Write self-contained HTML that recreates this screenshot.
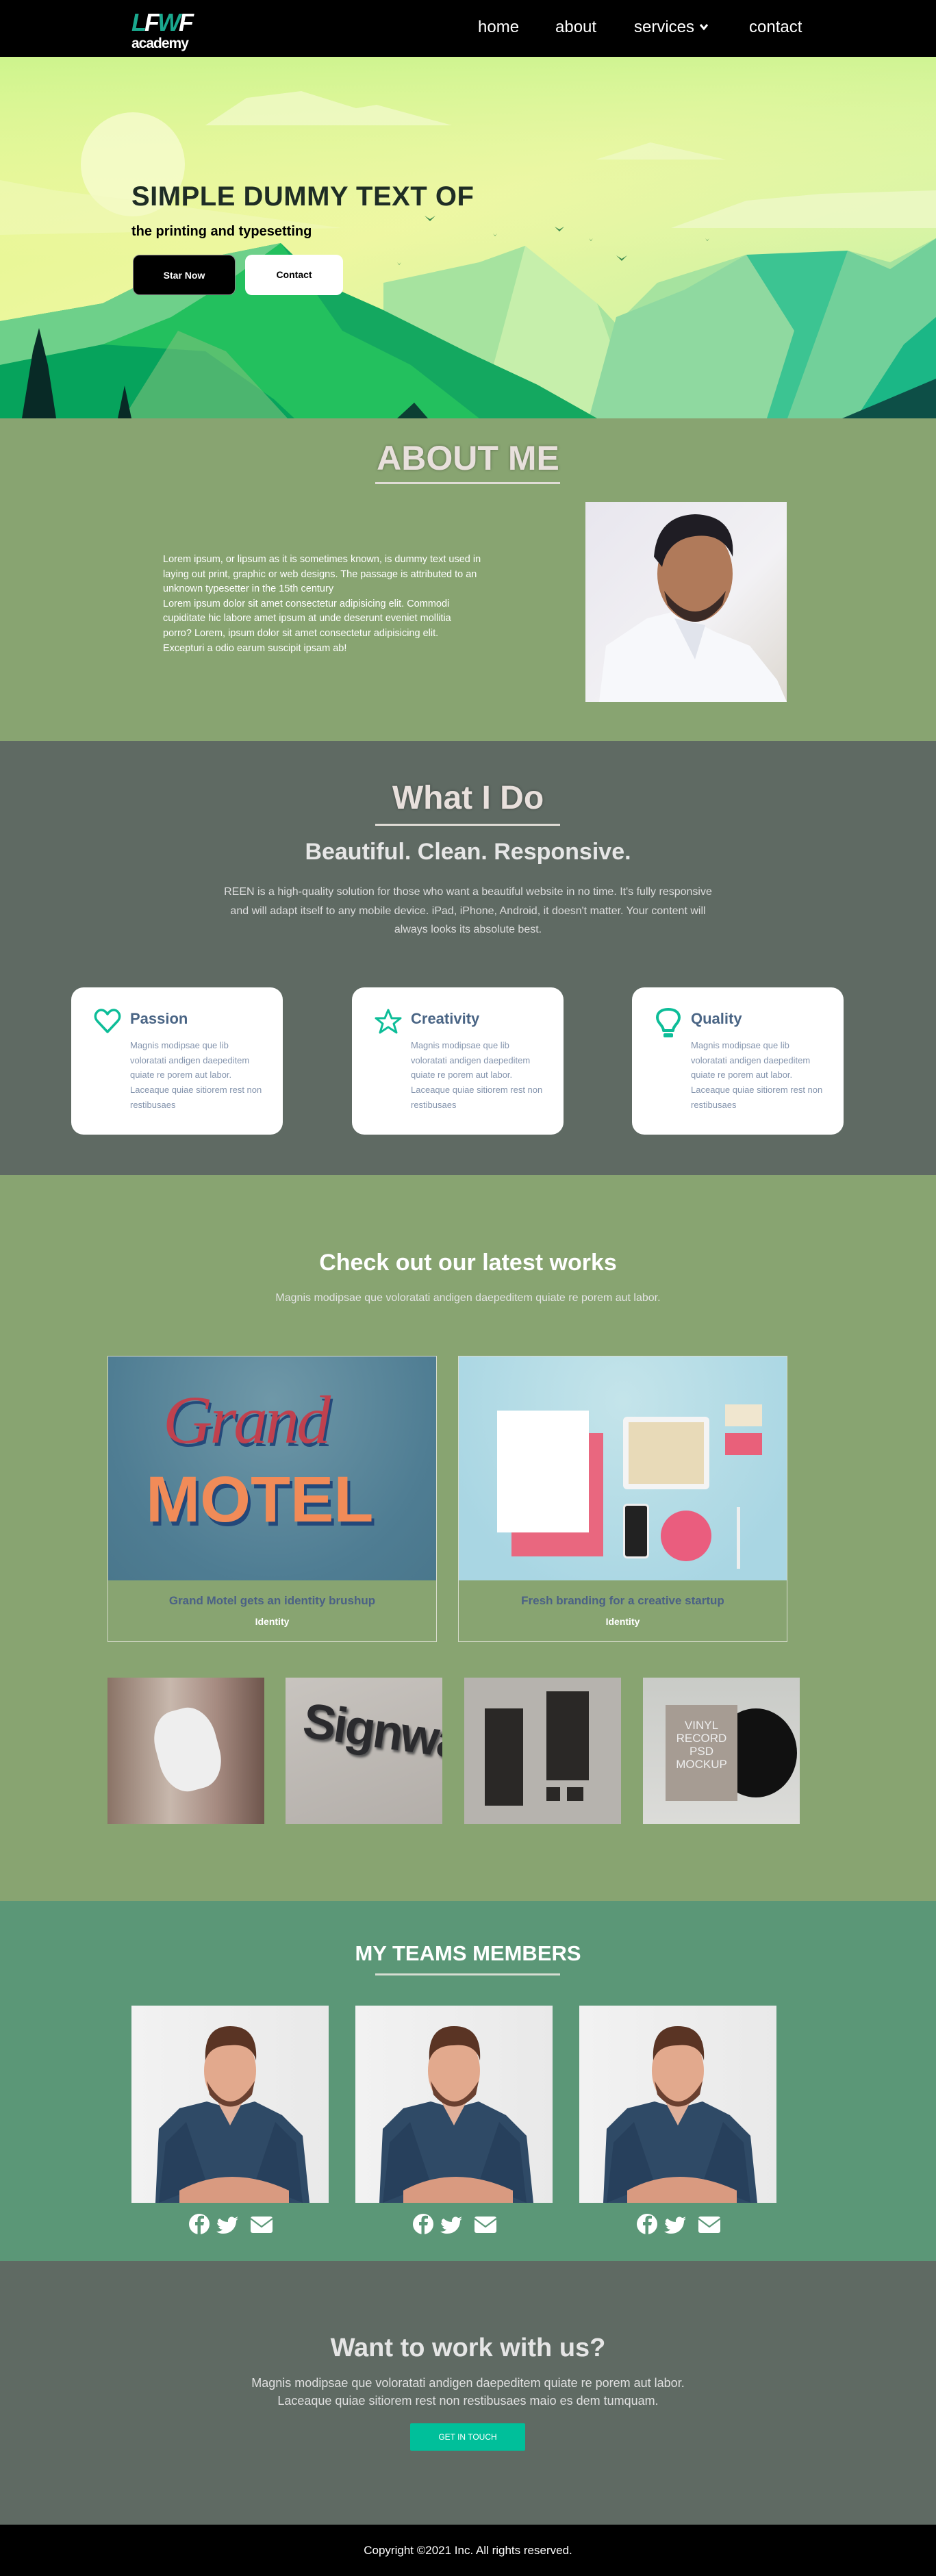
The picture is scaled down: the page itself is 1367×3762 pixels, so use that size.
<!DOCTYPE html>
<html><head><meta charset="utf-8">
<style>
*{margin:0;padding:0;box-sizing:border-box}
body{width:1367px;height:3762px;font-family:"Liberation Sans",Arial,sans-serif;background:#88a471;overflow:hidden;position:relative}
.abs{position:absolute}
nav{position:absolute;left:0;top:0;width:1367px;height:83px;background:#000}
nav a{position:absolute;top:26px;color:#fff;font-size:24px;text-decoration:none}
.hero{position:absolute;top:83px;left:0;width:1367px;height:528px;overflow:hidden}
.sec-title{position:absolute;width:1367px;text-align:center;color:#e8e0dc;font-weight:bold;text-shadow:0 0 4px rgba(0,0,0,.35)}
.uline{position:absolute;left:548px;width:270px;height:3px;background:#e0dcd6}
.card{position:absolute;top:1442px;width:309px;height:215px;background:#fff;border-radius:18px}
.card h3{position:absolute;left:86px;top:33px;font-size:22px;color:#4a6585}
.card p{position:absolute;left:86px;top:74px;font-size:13px;line-height:21.7px;color:#8494ad;width:200px}
.card svg{position:absolute;left:33px;top:30px}
.work{position:absolute;top:1980px;width:481px;border:1.5px solid #d8dccd;height:418px}
.work .img{height:327px;overflow:hidden;position:relative}
.work h4{text-align:center;color:#4b6185;font-size:17px;margin-top:20px}
.work h5{text-align:center;color:#fff;font-size:14px;margin-top:12px}
.th{position:absolute;top:2450px;width:229px;height:214px;overflow:hidden}
.team{position:absolute;top:2929px;width:288px;height:288px;background:linear-gradient(90deg,#f2f2f2,#e9e9e9);overflow:hidden}
.icons{position:absolute;top:3233px;width:122px;height:30px}
</style></head><body>

<nav>
  <div class="abs" style="left:192px;top:16px;font-size:36px;font-weight:bold;letter-spacing:-3px;line-height:34px;font-style:italic"><span style="color:#1aa88e">L</span><span style="color:#fff">F</span><span style="color:#1aa88e">W</span><span style="color:#fff">F</span></div>
  <div class="abs" style="left:192px;top:52px;font-size:21px;color:#fff;font-weight:bold;letter-spacing:-1px">academy</div>
  <a style="left:698px">home</a>
  <a style="left:811px">about</a>
  <a style="left:926px">services <svg width="14" height="12" viewBox="0 0 14 12" style="vertical-align:2px"><path d="M2 3 L7 9 L12 3" stroke="#fff" stroke-width="3" fill="none"/></svg></a>
  <a style="left:1094px">contact</a>
</nav>

<div class="hero">
<svg width="1367" height="528" viewBox="0 0 1367 528" preserveAspectRatio="none">
<defs><linearGradient id="sky" x1="0" y1="0" x2="1" y2="1">
<stop offset="0" stop-color="#e2f78a"/><stop offset="0.45" stop-color="#edf7a0"/><stop offset="1" stop-color="#bdf0a5"/></linearGradient>
<linearGradient id="sky2" x1="0" y1="0" x2="0" y2="1"><stop offset="0" stop-color="#c4f38e" stop-opacity="0.7"/><stop offset="1" stop-color="#fdfbc0" stop-opacity="0"/></linearGradient></defs>
<rect width="1367" height="528" fill="url(#sky)"/>
<rect width="1367" height="300" fill="url(#sky2)"/>
<circle cx="194" cy="157" r="76" fill="#f6fbcf" opacity="0.8"/>
<path d="M300 100 L360 60 L440 50 L520 75 L550 70 L660 100 Z" fill="#f0fac8" opacity="0.8"/>
<path d="M870 150 L950 125 L1060 150 Z" fill="#f0fac8" opacity="0.7"/>
<path d="M980 250 L1090 210 L1200 200 L1367 195 L1367 250 Z" fill="#eef9c8" opacity="0.8"/>
<path d="M0 180 L80 195 L200 210 L350 230 L500 250 L0 260 Z" fill="#f2f9c0" opacity="0.5"/>
<path d="M560 330 L700 300 L767 276 L830 330 L872 360 L900 390 L960 330 L1090 289 L1140 345 L1238 283 L1300 300 L1367 265 L1367 528 L560 528 Z" fill="#a6e39f"/>
<path d="M700 528 L767 276 L872 360 L930 528 Z" fill="#c6efab"/>
<path d="M860 528 L900 380 L1000 340 L1090 289 L1160 400 L1180 528 Z" fill="#8fd9a0"/>
<path d="M1090 289 L1160 400 L1120 528 L1230 528 L1238 283 Z" fill="#3cc492"/>
<path d="M1150 528 L1238 283 L1300 310 L1367 265 L1367 528 Z" fill="#72d09a"/>
<path d="M1250 528 L1320 420 L1367 380 L1367 528 Z" fill="#1bb786"/>
<path d="M1230 528 L1367 470 L1367 528 Z" fill="#0d4f47"/>
<path d="M0 386 L150 360 L270 300 L410 272 L470 330 L558 369 L680 430 L785 479 L872 528 L0 528 Z" fill="#23c05e"/>
<path d="M0 386 L150 360 L270 300 L410 272 L330 330 L250 380 L150 420 L0 450 Z" fill="#6ed08a"/>
<path d="M410 272 L470 330 L558 369 L680 430 L785 479 L872 528 L700 528 L600 450 L500 400 Z" fill="#14a860"/>
<path d="M0 450 L150 420 L300 430 L400 500 L430 528 L0 528 Z" fill="#06a35c"/>
<path d="M180 528 L260 400 L330 430 L420 528 Z" fill="#7bc27c" opacity="0.6"/>
<path d="M32 528 L48 430 L57 396 L70 450 L82 528 Z" fill="#082a26"/>
<path d="M172 528 L182 480 L192 528 Z" fill="#082a26"/>
<path d="M580 528 L605 505 L625 528 Z" fill="#0b3f33"/>
<g fill="#3b8a4e"><path d="M620 232 l8 5 l8 -5 l-8 8z"/><path d="M810 248 l7 4 l7 -4 l-7 7z"/><path d="M900 290 l8 5 l8 -5 l-8 8z"/><path d="M720 258 l3 3 l3 -3 l-3 4z"/><path d="M860 265 l3 3 l3 -3 l-3 4z"/><path d="M1030 265 l3 3 l3 -3 l-3 4z"/><path d="M580 300 l3 3 l3 -3 l-3 4z"/></g>
</svg>
<div class="abs" style="left:192px;top:182px;font-size:40px;font-weight:900;color:#1f2d25;letter-spacing:0.5px">SIMPLE DUMMY TEXT OF</div>
<div class="abs" style="left:192px;top:244px;font-size:20px;font-weight:bold;color:#000">the printing and typesetting</div>
<div class="abs" style="left:194px;top:289px;width:150px;height:59px;background:#000;border-radius:10px;color:#fff;font-size:14px;font-weight:bold;text-align:center;line-height:59px;border:1px solid #888">Star Now</div>
<div class="abs" style="left:358px;top:289px;width:143px;height:59px;background:#fff;border-radius:10px;color:#000;font-size:14px;font-weight:bold;text-align:center;line-height:59px">Contact</div>
</div>

<div class="abs" style="top:611px;left:0;width:1367px;height:471px;background:#88a471"></div>
<div class="sec-title" style="top:640px;font-size:50px">ABOUT ME</div>
<div class="uline" style="top:704px"></div>
<div class="abs" style="left:238px;top:807px;width:500px;font-size:14.5px;line-height:21.6px;color:#fff">Lorem ipsum, or lipsum as it is sometimes known, is dummy text used in laying out print, graphic or web designs. The passage is attributed to an unknown typesetter in the 15th century<div style="width:450px">Lorem ipsum dolor sit amet consectetur adipisicing elit. Commodi cupiditate hic labore amet ipsum at unde deserunt eveniet mollitia porro? Lorem, ipsum dolor sit amet consectetur adipisicing elit. Excepturi a odio earum suscipit ipsam ab!</div></div>
<div class="abs" style="left:855px;top:733px;width:294px;height:292px;background:linear-gradient(135deg,#e8e6ee,#f2f1f4 60%,#ddd8d0);overflow:hidden">
 <svg width="294" height="292" viewBox="0 0 294 292">
  <path d="M20 292 L30 210 L90 170 L130 160 L190 190 L240 210 L280 260 L294 292 Z" fill="#f7f8fb"/>
  <path d="M130 170 L160 230 L175 180 Z" fill="#e1e4ec"/>
  <ellipse cx="160" cy="105" rx="55" ry="70" fill="#b07a5a"/>
  <path d="M100 80 Q105 20 160 18 Q220 20 215 80 Q200 45 160 50 Q120 55 112 95 Z" fill="#1f1d24"/>
  <path d="M115 130 Q160 190 205 130 L200 150 Q160 200 120 150 Z" fill="#3a2a26"/>
 </svg>
</div>

<div class="abs" style="top:1082px;left:0;width:1367px;height:634px;background:#5f6a63"></div>
<div class="sec-title" style="top:1138px;font-size:48px">What I Do</div>
<div class="uline" style="top:1203px"></div>
<div class="abs" style="top:1225px;width:1367px;text-align:center;font-size:34px;font-weight:bold;color:#e6e6e6">Beautiful. Clean. Responsive.</div>
<div class="abs" style="top:1289px;left:320px;width:727px;text-align:center;font-size:16px;line-height:27.5px;color:#dedede">REEN is a high-quality solution for those who want a beautiful website in no time. It's fully responsive and will adapt itself to any mobile device. iPad, iPhone, Android, it doesn't matter. Your content will always looks its absolute best.</div>

<div class="card" style="left:104px">
 <svg width="40" height="40" viewBox="0 0 40 40"><path d="M20 35 L5 19 C-1 12 4 3 11 3 C15 3 18 6 20 9 C22 6 25 3 29 3 C36 3 41 12 35 19 Z" fill="none" stroke="#0dbd98" stroke-width="3.5" stroke-linejoin="round"/></svg>
 <h3>Passion</h3>
 <p>Magnis modipsae que lib voloratati andigen daepeditem quiate re porem aut labor. Laceaque quiae sitiorem rest non restibusaes</p>
</div>
<div class="card" style="left:514px">
 <svg width="40" height="40" viewBox="0 0 40 40"><path d="M20 3 L25 15 L38 15 L28 23 L32 36 L20 28 L8 36 L12 23 L2 15 L15 15 Z" fill="none" stroke="#0dbd98" stroke-width="3" stroke-linejoin="round"/></svg>
 <h3>Creativity</h3>
 <p>Magnis modipsae que lib voloratati andigen daepeditem quiate re porem aut labor. Laceaque quiae sitiorem rest non restibusaes</p>
</div>
<div class="card" style="left:923px">
 <svg width="40" height="50" viewBox="0 0 40 50"><path d="M13 33 C13 26 4 22 4 14 C4 6 11 2 20 2 C29 2 36 6 36 14 C36 22 27 26 27 33 Z" fill="none" stroke="#0dbd98" stroke-width="4" stroke-linejoin="round"/><rect x="13" y="37" width="14" height="6" rx="2" fill="#0dbd98"/></svg>
 <h3>Quality</h3>
 <p>Magnis modipsae que lib voloratati andigen daepeditem quiate re porem aut labor. Laceaque quiae sitiorem rest non restibusaes</p>
</div>

<div class="abs" style="top:1825px;width:1367px;text-align:center;font-size:34px;font-weight:bold;color:#fff">Check out our latest works</div>
<div class="abs" style="top:1887px;width:1367px;text-align:center;font-size:16px;color:#e3e3e3">Magnis modipsae que voloratati andigen daepeditem quiate re porem aut labor.</div>

<div class="work" style="left:157px">
 <div class="img" style="background:radial-gradient(ellipse at 50% 20%,#6f98a8,#4f7d93 70%,#4a778c)">
  <div class="abs" style="left:80px;top:35px;font-family:'Liberation Serif',serif;font-style:italic;font-size:100px;color:#c0414e;text-shadow:3px 5px 0 #24497a;letter-spacing:-4px">Grand</div>
  <div class="abs" style="left:55px;top:155px;font-size:95px;font-weight:900;color:#f18b58;text-shadow:4px 6px 0 #23487a">MOTEL</div>
 </div>
 <h4>Grand Motel gets an identity brushup</h4>
 <h5>Identity</h5>
</div>
<div class="work" style="left:669px">
 <div class="img" style="background:radial-gradient(ellipse at 50% 20%,#c4e4ea,#a9d6e3 80%)">
  <div class="abs" style="left:77px;top:112px;width:134px;height:180px;background:#e9677f"></div>
  <div class="abs" style="left:56px;top:79px;width:134px;height:178px;background:#fff"></div>
  <div class="abs" style="left:240px;top:88px;width:126px;height:106px;background:#f4f4f4;border-radius:6px;padding:8px"><div style="background:#e8dab8;width:100%;height:100%"></div></div>
  <div class="abs" style="left:389px;top:70px;width:54px;height:32px;background:#f0e6cf"></div>
  <div class="abs" style="left:389px;top:112px;width:54px;height:32px;background:#e9607a"></div>
  <div class="abs" style="left:240px;top:215px;width:38px;height:80px;background:#222;border:3px solid #eee;border-radius:6px"></div>
  <div class="abs" style="left:295px;top:225px;width:74px;height:74px;background:#ea5d7e;border-radius:50%"></div>
  <div class="abs" style="left:406px;top:220px;width:5px;height:90px;background:#eee"></div>
 </div>
 <h4>Fresh branding for a creative startup</h4>
 <h5>Identity</h5>
</div>

<div class="th" style="left:157px;background:linear-gradient(90deg,#8a7366,#c8b8ad 40%,#a58a80 70%,#6e554c)"><div class="abs" style="left:72px;top:45px;width:90px;height:120px;border-radius:40%;background:#eee;transform:rotate(-15deg)"></div></div>
<div class="th" style="left:417px;background:linear-gradient(160deg,#c8c4bf,#b3aea9)"><div class="abs" style="left:25px;top:40px;font-size:72px;font-weight:bold;color:#2b2b2e;transform:rotate(8deg);letter-spacing:-3px;text-shadow:3px 3px 3px #555">Signwall</div></div>
<div class="th" style="left:678px;background:#b6b3ae"><div class="abs" style="left:30px;top:45px;width:56px;height:142px;background:#2a2826"></div><div class="abs" style="left:120px;top:20px;width:62px;height:130px;background:#2a2826"></div><div class="abs" style="left:120px;top:160px;width:20px;height:20px;background:#2a2826"></div><div class="abs" style="left:150px;top:160px;width:24px;height:20px;background:#2a2826"></div></div>
<div class="th" style="left:939px;background:linear-gradient(180deg,#c9cbc7,#dcdcd9)"><div class="abs" style="left:105px;top:45px;width:120px;height:130px;border-radius:50%;background:#111"></div><div class="abs" style="left:33px;top:40px;width:105px;height:140px;background:#a69c93;color:#eee;font-size:17px;text-align:center;padding-top:20px;line-height:19px">VINYL<br>RECORD<br>PSD<br>MOCKUP</div></div>

<div class="abs" style="top:2776px;left:0;width:1367px;height:526px;background:#5b9777"></div>
<div class="abs" style="top:2835px;width:1367px;text-align:center;font-size:31px;font-weight:bold;color:#fff">MY TEAMS MEMBERS</div>
<div class="uline" style="top:2882px;background:#d6ddd2"></div>

<svg width="0" height="0" style="position:absolute"><defs>
<g id="man">
 <path d="M35 288 L40 180 L70 150 L110 140 L144 150 L180 140 L220 160 L250 190 L260 288 Z" fill="#2f4a66"/>
 <path d="M40 288 L50 200 L80 170 L110 260 Z M250 288 L240 200 L210 170 L180 260 Z" fill="#233a55" opacity="0.6"/>
 <path d="M70 270 Q144 230 230 270 L230 288 L70 288 Z" fill="#d99a80"/>
 <path d="M120 130 L144 175 L168 130 Z" fill="#e0b09a"/>
 <ellipse cx="144" cy="95" rx="38" ry="52" fill="#e2a98d"/>
 <path d="M108 80 Q105 30 144 30 Q185 30 182 80 Q175 55 144 58 Q115 58 108 80 Z" fill="#5a3424"/>
 <path d="M110 110 Q144 170 180 110 L176 130 Q144 165 114 130 Z" fill="#6a4030"/>
</g>
<g id="soc" fill="#fff">
 <circle cx="15" cy="15" r="15"/><path d="M17 30 V17 H21 L22 12 H17 V9 C17 7.5 18 7 19.5 7 H22 V3 C21 3 19.5 2.8 18 2.8 C14.5 2.8 12.5 5 12.5 8.5 V12 H9 V17 H12.5 V30 Z" fill="#5b9777"/>
 <path d="M45 7 C48 10 52 12 57 12 C56 6 62 2 66 6 C68 6 70 5 71 4 C71 6 69 7 68 8 C70 8 71 7 72 7 C71 8 70 9 69 10 C69 20 62 29 50 29 C46 29 43 28 40 26 C44 26 47 25 49 23 C46 23 44 21 43 19 C44 19 45 19 46 19 C43 18 41 15 41 13 C42 13 43 14 44 14 C41 12 41 9 45 7 Z"/>
 <rect x="90" y="4" width="32" height="24" rx="3"/><path d="M90 7 L106 19 L122 7" stroke="#5b9777" stroke-width="2.2" fill="none"/>
</g></defs></svg>

<div class="team" style="left:192px"><svg width="288" height="288"><use href="#man"/></svg></div>
<div class="team" style="left:519px"><svg width="288" height="288"><use href="#man"/></svg></div>
<div class="team" style="left:846px"><svg width="288" height="288"><use href="#man"/></svg></div>
<svg class="icons" style="left:276px" viewBox="0 0 122 30"><use href="#soc"/></svg>
<svg class="icons" style="left:603px" viewBox="0 0 122 30"><use href="#soc"/></svg>
<svg class="icons" style="left:930px" viewBox="0 0 122 30"><use href="#soc"/></svg>

<div class="abs" style="top:3302px;left:0;width:1367px;height:385px;background:#5f6a63"></div>
<div class="abs" style="top:3408px;width:1367px;text-align:center;font-size:38px;font-weight:bold;color:#e5e5e5">Want to work with us?</div>
<div class="abs" style="top:3467px;width:1367px;text-align:center;font-size:18px;line-height:26px;color:#e0e0e0">Magnis modipsae que voloratati andigen daepeditem quiate re porem aut labor.<br>Laceaque quiae sitiorem rest non restibusaes maio es dem tumquam.</div>
<div class="abs" style="left:599px;top:3539px;width:168px;height:40px;background:#00bf9a;color:#fff;font-size:12px;text-align:center;line-height:40px;border-radius:2px">GET IN TOUCH</div>

<div class="abs" style="top:3687px;left:0;width:1367px;height:75px;background:#000;color:#fff;text-align:center;font-size:17px;line-height:75px">Copyright ©2021 Inc. All rights reserved.</div>
</body></html>
